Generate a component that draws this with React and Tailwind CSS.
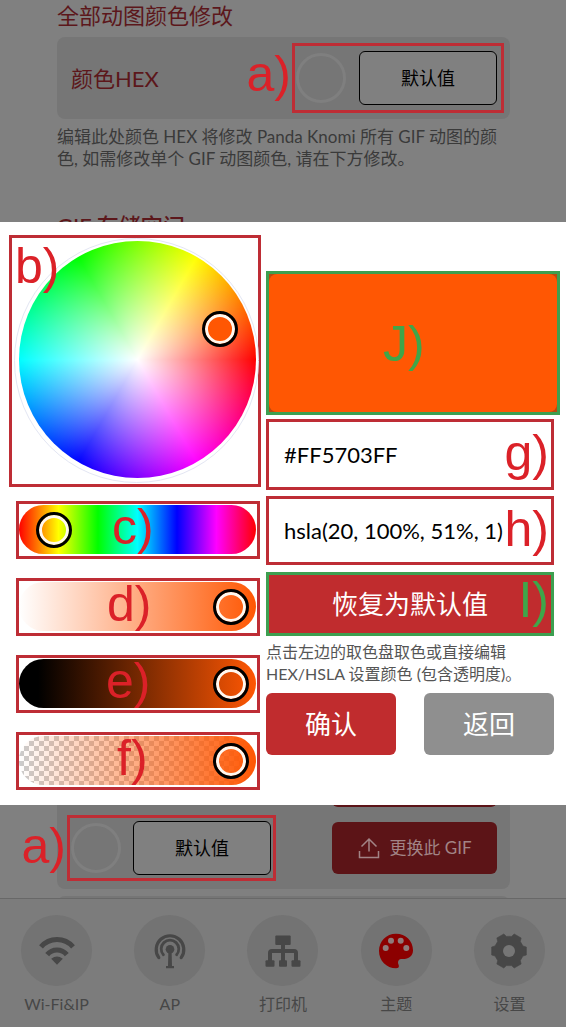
import React, { useState } from "react";

function Frame({ mark, markClass, green, className = "", children }) {
  return (
    <div
      className={`relative border-3 ${green ? "border-[#3d9f50]" : "border-[#be2d35]"} ${className}`}
    >
      {children}
      <span
        className={`pointer-events-none absolute z-10 font-[Liberation_Sans,Arial,sans-serif] text-[50px] leading-none ${green ? "text-[#3fa64a]" : "text-[#db2128]"} ${markClass}`}
      >
        {mark}
      </span>
    </div>
  );
}

function Slider({ label, value, max, track }) {
  const [current, setCurrent] = useState(value);
  return (
    <input
      type="range"
      aria-label={label}
      min="0"
      max={max}
      value={current}
      onChange={(e) => setCurrent(Number(e.target.value))}
      className={`block h-[49px] w-full appearance-none rounded-full px-[7px] [&::-webkit-slider-thumb]:size-9 [&::-webkit-slider-thumb]:appearance-none [&::-webkit-slider-thumb]:rounded-full [&::-webkit-slider-thumb]:border-3 [&::-webkit-slider-thumb]:border-black [&::-webkit-slider-thumb]:bg-transparent [&::-webkit-slider-thumb]:shadow-[inset_0_0_0_3px_#fff8f0] ${track}`}
    />
  );
}

function DefaultColor() {
  return (
    <>
      <span className="size-[50px] shrink-0 rounded-full border-3 border-[#7f7f7f]" />
      <button className="h-[54px] w-[138px] shrink-0 rounded-md border border-black bg-[#808080] text-lg text-black">
        默认值
      </button>
    </>
  );
}

function WifiIcon() {
  return (
    <svg viewBox="-18 -18 36 36" className="size-9" fill="none" stroke="#474747" strokeWidth="5">
      <path d="M-16 -4.2A21 21 0 0 1 16 -4.2" />
      <path d="M-9.8 3.6A12.6 12.6 0 0 1 9.8 3.6" />
      <path d="M-5.8 7.8Q0 3 5.8 7.8L0 13.8Z" fill="#474747" stroke="none" />
    </svg>
  );
}

function AntennaIcon() {
  return (
    <svg viewBox="-18 -18 36 36" className="size-9" fill="none" stroke="#474747" strokeLinecap="round">
      <path d="M-11.2 6.6A13.8 13.8 0 1 1 11.2 6.6" strokeWidth="3.2" />
      <path d="M-6.6 3.8A8.8 8.8 0 1 1 6.6 3.8" strokeWidth="2.8" />
      <circle cy="-1.7" r="4.3" fill="#474747" stroke="none" />
      <path d="M-1.6 0H1.6L2 15H4V17.3H-4V15H-2Z" fill="#474747" stroke="none" />
    </svg>
  );
}

function NetworkIcon() {
  return (
    <svg viewBox="-18 -18 36 36" className="size-9" fill="#474747">
      <rect x="-7.7" y="-15.5" width="15.4" height="9.5" rx="1" />
      <path d="M0 -7V11M-13 11V2Q-13 0 -11 0H11Q13 0 13 2V11" fill="none" stroke="#474747" strokeWidth="4" />
      <rect x="-17.5" y="9.3" width="9" height="6.4" rx="1" />
      <rect x="-4" y="9.3" width="8" height="6.4" rx="1" />
      <rect x="8.5" y="9.3" width="9" height="6.4" rx="1" />
    </svg>
  );
}

function PaletteIcon() {
  return (
    <svg viewBox="-18 -18 36 36" className="size-9">
      <path
        d="M0 -17.3C-9.8 -17.3 -17 -9.6 -17 0C-17 9.6 -9.6 17.3 0 17.3C2.4 17.3 3.4 16 2.7 14C1.8 12 2 11 2.3 10C3 8.3 4.5 8 6.5 8C13 8 17 5 17 -0.8C17 -10 9.8 -17.3 0 -17.3Z"
        fill="#8c0000"
      />
      <g fill="#8f7b7b">
        <circle cx="-10.3" cy="-3" r="3" />
        <circle cx="-5" cy="-10.3" r="3" />
        <circle cx="4.7" cy="-10.3" r="3" />
        <circle cx="10.3" cy="-3" r="3" />
      </g>
    </svg>
  );
}

const gearPoints = [0, 60, 120, 180, 240, 300]
  .flatMap((a) => [
    [a - 27, 14.6],
    [a - 20, 14.8],
    [a - 13, 17.8],
    [a + 13, 17.8],
    [a + 20, 14.8],
    [a + 27, 14.6],
  ])
  .map(([a, r]) => {
    const t = (a * Math.PI) / 180;
    return `${(r * Math.cos(t)).toFixed(2)},${(r * Math.sin(t)).toFixed(2)}`;
  })
  .join(" ");

function GearIcon() {
  return (
    <svg viewBox="-18 -18 36 36" className="size-9 overflow-visible">
      <polygon points={gearPoints} fill="#474747" stroke="#474747" strokeWidth="0.6" strokeLinejoin="round" />
      <circle r="6" fill="#767676" />
    </svg>
  );
}

const tabs = [
  { name: "Wi-Fi&IP", Icon: WifiIcon },
  { name: "AP", Icon: AntennaIcon },
  { name: "打印机", Icon: NetworkIcon },
  { name: "主题", Icon: PaletteIcon },
  { name: "设置", Icon: GearIcon },
];

function ColorDialog() {
  return (
    <section
      role="dialog"
      aria-label="取色"
      className="relative z-10 -mt-4 flex bg-white pt-[13px] pr-1.5 pb-[15px] pl-[9px]"
    >
      <div className="w-[252px] shrink-0">
        <Frame mark="b)" markClass="left-[3px] top-[3px]" className="h-[252px]">
          <div className="absolute top-0 left-0.5 size-[245px] rounded-full border border-[#e3e6f3]" />
          <div className="absolute top-[3px] left-[7px] size-[237px] rounded-full bg-[radial-gradient(closest-side,#fff,transparent),conic-gradient(from_90deg,#f00,#f0f,#00f,#0ff,#0f0,#ff0,#f00)]">
            <button
              aria-label="颜色"
              className="absolute top-[70px] left-[183px] size-9 rounded-full border-3 border-black bg-[#ff5703] shadow-[inset_0_0_0_3px_#fff8f0]"
            />
          </div>
        </Frame>
        <div className="mt-3.5 ml-[7px] flex w-[244px] flex-col gap-[19px]">
          <Frame mark="c)" markClass="left-[93px] -top-0.5" className="h-[58px] pt-px pr-px">
            <Slider
              label="色相"
              value={20}
              max={360}
              track="bg-[linear-gradient(to_right,#f00,#ff0,#0f0,#0ff,#00f,#f0f,#f00)]"
            />
          </Frame>
          <Frame mark="d)" markClass="left-[88px] -top-0.5" className="h-[58px] pt-px pr-px">
            <Slider label="饱和度" value={100} max={100} track="bg-[linear-gradient(to_right,#fff,#ff5703)]" />
          </Frame>
          <Frame mark="e)" markClass="left-[87px] -top-0.5" className="h-[58px] pt-px pr-px">
            <Slider label="亮度" value={100} max={100} track="bg-[linear-gradient(to_right,#000_8%,#ff5703)]" />
          </Frame>
          <Frame mark="f)" markClass="left-[98px] -top-0.5" className="h-[58px] pt-px pr-px">
            <Slider
              label="透明度"
              value={100}
              max={100}
              track="bg-[linear-gradient(to_right,transparent,#ff5703),repeating-conic-gradient(#ccc_0_25%,#fff_0_50%)] bg-size-[100%_100%,10px_10px]"
            />
          </Frame>
        </div>
      </div>

      <div className="ml-[5px] flex min-w-0 flex-1 flex-col pt-9">
        <Frame green mark="J)" markClass="left-[114px] top-[45px]" className="h-36 bg-[#b84a10]">
          <div className="h-full rounded-lg bg-[#ff5703]" />
        </Frame>
        <div className="mt-1 mr-1.5 flex flex-col">
          <Frame mark="g)" markClass="right-[2px] top-[6px]" className="h-[71px]">
            <input
              aria-label="HEX"
              defaultValue="#FF5703FF"
              className="h-full w-full bg-white px-[15px] text-[22px] text-black outline-none"
            />
          </Frame>
          <Frame mark="h)" markClass="right-[2px] top-[5px]" className="mt-1.5 h-[69px]">
            <input
              aria-label="HSLA"
              defaultValue="hsla(20, 100%, 51%, 1)"
              className="h-full w-full bg-white px-[15px] text-[22px] text-black outline-none"
            />
          </Frame>
          <Frame green mark="I)" markClass="right-[2px] top-0" className="mt-[7px] h-16">
            <button className="h-full w-full bg-[#c02c2e] text-[26px] text-white">恢复为默认值</button>
          </Frame>
          <p className="mt-[5px] text-base leading-[22px] text-[#555]">
            点击左边的取色盘取色或直接编辑
            <br />
            HEX/HSLA 设置颜色 (包含透明度)。
          </p>
          <div className="mt-2 flex justify-between">
            <button className="h-[62px] w-[130px] rounded-md bg-[#c02c2e] text-[26px] text-white">确认</button>
            <button className="h-[62px] w-[130px] rounded-md bg-[#8f8f8f] text-[26px] text-white">返回</button>
          </div>
        </div>
      </div>
    </section>
  );
}

export default function App() {
  return (
    <div className="bg-[#808080] font-[Lato,'Noto_Sans_CJK_SC',sans-serif]">
      <main>
        <section className="mr-14 ml-[57px] pt-1">
          <h2 className="text-[22px] leading-6 text-[#5c171b]">全部动图颜色修改</h2>
          <div className="mt-[9px] flex h-[82px] items-center justify-between rounded-lg bg-[#767676] pr-1.5 pl-3.5">
            <span className="text-[22px] text-[#5c171b]">颜色HEX</span>
            <Frame
              mark="a)"
              markClass="right-full mr-1 top-[3px]"
              className="flex h-[70px] w-[212px] items-center justify-between pr-1 pl-px"
            >
              <DefaultColor />
            </Frame>
          </div>
          <p className="mt-[7px] text-[17px] leading-[22px] text-[#3a3a3a]">
            编辑此处颜色 HEX 将修改 Panda Knomi 所有 GIF 动图的颜
            <br />
            色, 如需修改单个 GIF 动图颜色, 请在下方修改。
          </p>
          <h2 className="mt-11 text-[22px] leading-6 font-medium text-[#5c171b]">GIF 存储空间</h2>
        </section>

        <ColorDialog />

        <section className="mr-14 ml-[57px] -mt-[66px]">
          <div className="rounded-lg bg-[#767676] pt-4 pr-[13px] pb-2 pl-3.5">
            <button aria-label="上一项" className="ml-auto block h-[52px] w-[165px] rounded-md bg-[#5c1417]" />
            <div className="mt-2 -ml-1 flex items-center justify-between">
              <Frame
                mark="a)"
                markClass="right-full mr-1 top-[3px]"
                className="flex h-[66px] w-[209px] items-center justify-between pr-0.5 pl-px"
              >
                <DefaultColor />
              </Frame>
              <button className="flex h-[52px] w-[165px] items-center justify-center gap-2 rounded-md bg-[#5c1417] text-[17px] text-[#a28486]">
                <svg viewBox="0 0 24 24" className="size-6" fill="none" stroke="currentColor" strokeWidth="1.5">
                  <path d="M12 15.5V3M4.5 10.5L12 3L19.5 10.5M2.5 15V21.5H21.5V15" />
                </svg>
                更换此 GIF
              </button>
            </div>
          </div>
          <div className="mt-[7px] h-5 rounded-lg bg-[#767676]" />
        </section>
      </main>

      <nav className="relative -mt-[18px] grid grid-cols-5 border-t border-[#686868] bg-[#7c7c7c] pt-4 pb-[11px]">
        {tabs.map(({ name, Icon }) => (
          <a key={name} href={`#${name}`} className="flex flex-col items-center gap-1.5">
            <span className="flex size-[71px] items-center justify-center rounded-full bg-[#737373]">
              <Icon />
            </span>
            <span className="text-base leading-6 text-[#474747]">{name}</span>
          </a>
        ))}
      </nav>
    </div>
  );
}
